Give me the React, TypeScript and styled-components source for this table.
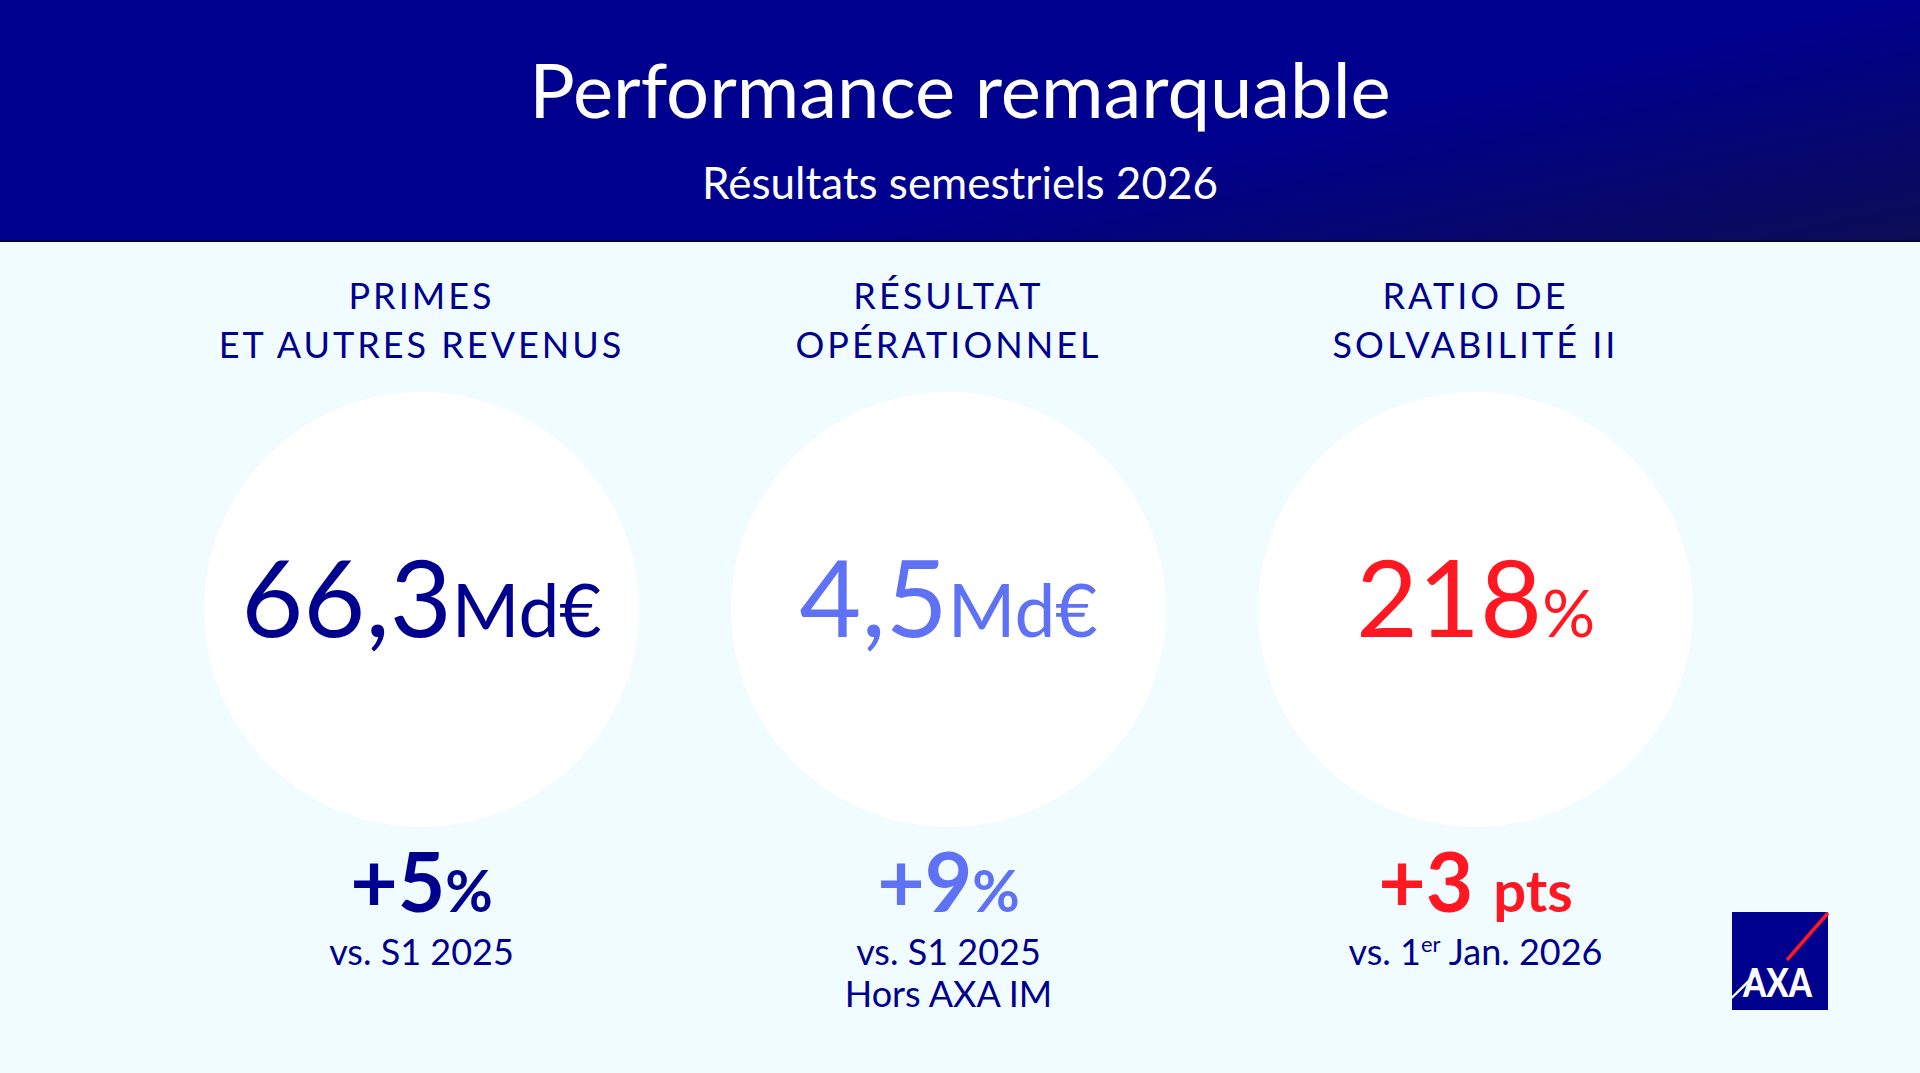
import React from "react";
import styled, { createGlobalStyle } from "styled-components";

const GlobalStyle = createGlobalStyle`
  html, body {
    margin: 0;
    padding: 0;
  }
  body {
    background: #f0fcff;
    font-family: Lato, "Open Sans", sans-serif;
    overflow: hidden;
  }
`;

const Page = styled.div`
  width: 1920px;
  height: 1073px;
  display: flex;
  flex-direction: column;
  background: #f0fcff;
`;

const Header = styled.header`
  height: 242px;
  flex-shrink: 0;
  box-sizing: border-box;
  display: flex;
  flex-direction: column;
  align-items: center;
  padding-top: 51px;
  background: linear-gradient(168deg, #00008f 0%, #00008f 62%, #0c0c55 100%);
  border-bottom: 2px solid #05053a;
  color: #ffffff;
`;

const Title = styled.h1`
  margin: 0;
  font-size: 76px;
  font-weight: 400;
  line-height: 1;
`;

const Subtitle = styled.h2`
  margin: 33px 0 0;
  font-size: 44px;
  font-weight: 400;
  line-height: 1;
`;

const Main = styled.main`
  flex: 1;
  display: grid;
  grid-template-columns: repeat(3, 527px) 1fr;
  padding-left: 158px;
`;

const Column = styled.section`
  display: flex;
  flex-direction: column;
  align-items: center;
  padding-top: 29px;
  color: #00008f;
`;

const Label = styled.h3`
  margin: 0;
  font-size: 36px;
  font-weight: 400;
  line-height: 49px;
  letter-spacing: 3px;
  text-align: center;
  text-transform: uppercase;
`;

const Circle = styled.div`
  margin-top: 23px;
  width: 435px;
  height: 435px;
  border-radius: 50%;
  background: #ffffff;
  display: flex;
  align-items: center;
  justify-content: center;
  box-sizing: border-box;
  padding-bottom: 28px;
`;

const Value = styled.div<{ $color: string }>`
  color: ${(p) => p.$color};
  font-size: 107px;
  line-height: 1;
  white-space: nowrap;
`;

const Unit = styled.span<{ $size: number }>`
  font-size: ${(p) => p.$size}px;
`;

const Change = styled.div<{ $color: string }>`
  margin-top: 12px;
  color: ${(p) => p.$color};
  font-size: 82px;
  font-weight: 700;
  line-height: 1;
  white-space: nowrap;
`;

const ChangeUnit = styled.span`
  font-size: 58px;
`;

const Note = styled.p`
  margin: 9px 0 0;
  font-size: 36px;
  line-height: 42px;
  text-align: center;
  color: #00008f;

  sup {
    font-size: 22px;
    line-height: 0;
    vertical-align: 13px;
  }
`;

const LogoBox = styled.div`
  align-self: end;
  justify-self: start;
  margin: 0 0 63px -7px;
  width: 96px;
  height: 98px;

  svg {
    display: block;
    overflow: visible;
  }
`;

function AxaLogo() {
  return (
    <LogoBox>
      <svg width="96" height="98" viewBox="0 0 96 98">
        <rect width="96" height="98" fill="#00008f" />
        <polygon points="0,87 0,84 22,62 24,64" fill="#ffffff" />
        <text
          x="11"
          y="85"
          fill="#ffffff"
          fontFamily="Lato, 'Open Sans', sans-serif"
          fontWeight="900"
          fontSize="40"
          textLength="69"
          lengthAdjust="spacingAndGlyphs"
        >
          AXA
        </text>
        <line x1="96" y1="1" x2="55" y2="48" stroke="#ff1721" strokeWidth="3.5" />
      </svg>
    </LogoBox>
  );
}

function App() {
  return (
    <Page>
      <GlobalStyle />
      <Header>
        <Title>Performance remarquable</Title>
        <Subtitle>Résultats semestriels 2026</Subtitle>
      </Header>
      <Main>
        <Column>
          <Label>
            Primes
            <br />
            et autres revenus
          </Label>
          <Circle>
            <Value $color="#00008f">
              66,3<Unit $size={73}>Md€</Unit>
            </Value>
          </Circle>
          <Change $color="#00008f">
            +5<ChangeUnit>%</ChangeUnit>
          </Change>
          <Note>vs. S1 2025</Note>
        </Column>
        <Column>
          <Label>
            Résultat
            <br />
            opérationnel
          </Label>
          <Circle>
            <Value $color="#5f72f5">
              4,5<Unit $size={73}>Md€</Unit>
            </Value>
          </Circle>
          <Change $color="#5f72f5">
            +9<ChangeUnit>%</ChangeUnit>
          </Change>
          <Note>
            vs. S1 2025
            <br />
            Hors AXA IM
          </Note>
        </Column>
        <Column>
          <Label>
            Ratio de
            <br />
            solvabilité II
          </Label>
          <Circle>
            <Value $color="#ff1721">
              218<Unit $size={66}>%</Unit>
            </Value>
          </Circle>
          <Change $color="#ff1721">
            +3 <ChangeUnit>pts</ChangeUnit>
          </Change>
          <Note>
            vs. 1<sup>er</sup> Jan. 2026
          </Note>
        </Column>
        <AxaLogo />
      </Main>
    </Page>
  );
}

export default App;
